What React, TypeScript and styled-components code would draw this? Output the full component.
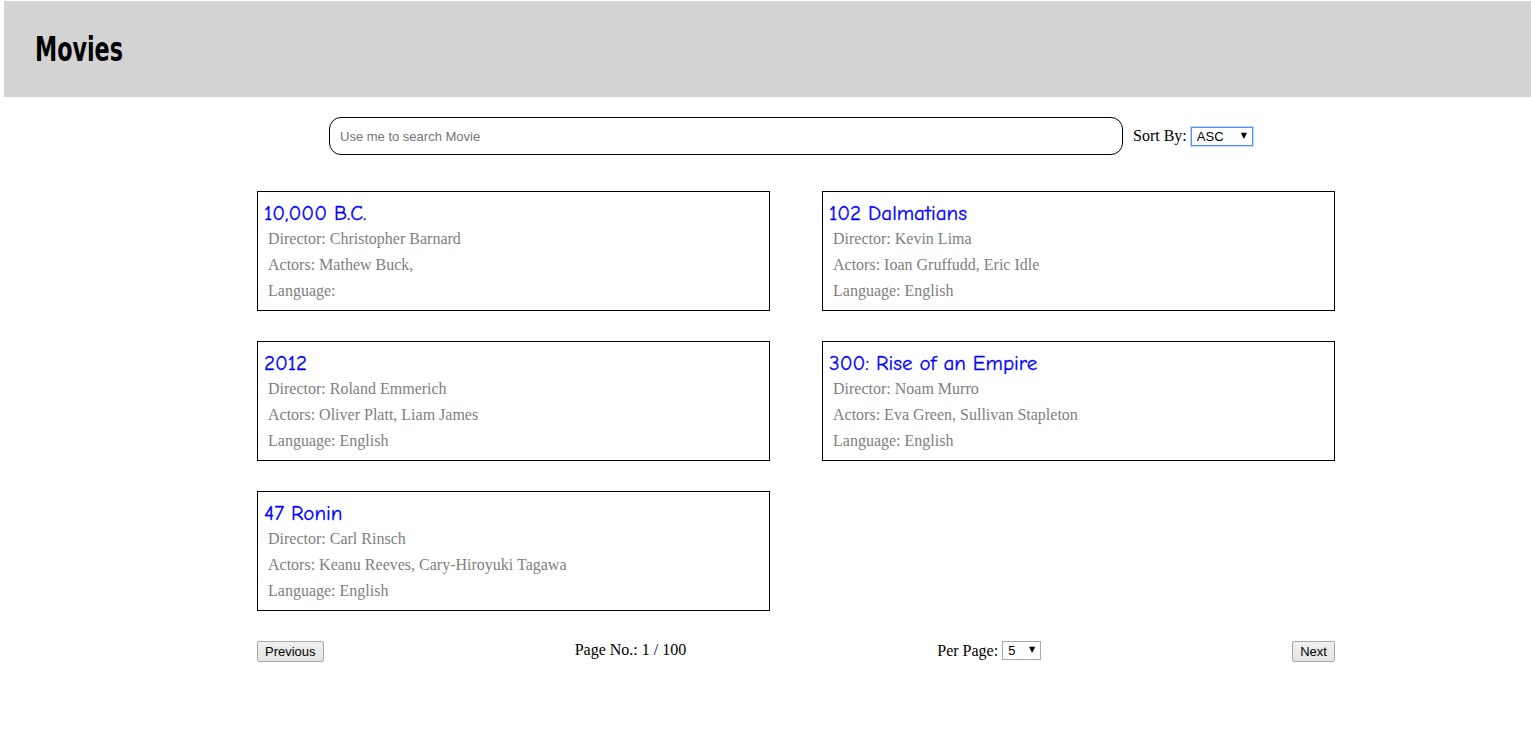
import React, { useState } from "react";
import styled, { createGlobalStyle } from "styled-components";

interface Movie {
  title: string;
  director: string;
  actors: string;
  language: string;
}

const movies: Movie[] = [
  { title: "10,000 B.C.", director: "Christopher Barnard", actors: "Mathew Buck,", language: "" },
  { title: "102 Dalmatians", director: "Kevin Lima", actors: "Ioan Gruffudd, Eric Idle", language: "English" },
  { title: "2012", director: "Roland Emmerich", actors: "Oliver Platt, Liam James", language: "English" },
  { title: "300: Rise of an Empire", director: "Noam Murro", actors: "Eva Green, Sullivan Stapleton", language: "English" },
  { title: "47 Ronin", director: "Carl Rinsch", actors: "Keanu Reeves, Cary-Hiroyuki Tagawa", language: "English" },
];

const GlobalStyle = createGlobalStyle`
  html, body {
    margin: 0;
    padding: 0;
    background: #fff;
    font-family: "Liberation Serif", "Times New Roman", serif;
    font-size: 16px;
  }
`;

const App = () => {
  const [query, setQuery] = useState("");
  const [sort, setSort] = useState("ASC");
  const [perPage, setPerPage] = useState("5");

  return (
    <>
      <GlobalStyle />
      <Header>
        <Title>Movies</Title>
      </Header>

      <Main>
        <SearchRow>
          <SearchInput
            placeholder="Use me to search Movie"
            value={query}
            onChange={(e) => setQuery(e.target.value)}
          />
          <Label>Sort By:</Label>
          <SelectWrap>
            <Select $width={62} $focused value={sort} onChange={(e) => setSort(e.target.value)}>
              <option>ASC</option>
              <option>DESC</option>
            </Select>
            <Arrow>▼</Arrow>
          </SelectWrap>
        </SearchRow>

        <Grid>
          {movies.map((m) => (
            <Card key={m.title}>
              <MovieTitle>{m.title}</MovieTitle>
              <Detail>Director: {m.director}</Detail>
              <Detail>Actors: {m.actors}</Detail>
              <Detail>Language: {m.language}</Detail>
            </Card>
          ))}
        </Grid>

        <Pagination>
          <Button>Previous</Button>
          <Label>Page No.: 1 / 100</Label>
          <PerPage>
            <Label>Per Page:</Label>
            <SelectWrap>
              <Select $width={39} value={perPage} onChange={(e) => setPerPage(e.target.value)}>
                <option>5</option>
                <option>10</option>
                <option>20</option>
              </Select>
              <Arrow>▼</Arrow>
            </SelectWrap>
          </PerPage>
          <Button>Next</Button>
        </Pagination>
      </Main>
    </>
  );
};

export default App;

const Header = styled.header`
  margin: 1px 0 0 4px;
  height: 96px;
  background-color: #d3d3d3;
  display: flex;
  align-items: center;
  padding-left: 31px;
`;

// no Impact here: squeeze the condensed bold face to the same width
const Title = styled.h1`
  margin: 0;
  font-family: Impact, "DejaVu Sans Condensed", sans-serif;
  font-weight: 700;
  font-size: 33px;
  color: #000;
  transform: scaleX(0.75);
  transform-origin: left center;
`;

const Main = styled.main`
  width: 1078px;
  margin-left: 257px;
  padding-top: 20px;
`;

const SearchRow = styled.div`
  display: flex;
  align-items: center;
  padding-left: 72px;
  gap: 10px;
`;

const SearchInput = styled.input`
  box-sizing: border-box;
  width: 794px;
  height: 38px;
  border: 1px solid #000;
  border-radius: 12px;
  padding: 0 10px;
  font-family: "Liberation Sans", Arial, sans-serif;
  font-size: 13px;
  outline: none;

  &::placeholder {
    color: #757575;
  }
`;

const Label = styled.span`
  font-family: "Liberation Serif", "Times New Roman", serif;
  font-size: 16px;
  color: #000;
  white-space: nowrap;
`;

const SelectWrap = styled.span`
  position: relative;
  display: inline-flex;
  margin-left: -6px;
`;

const Select = styled.select<{ $width: number; $focused?: boolean }>`
  appearance: none;
  box-sizing: border-box;
  width: ${(p) => p.$width}px;
  height: 19px;
  padding: 0 0 0 5px;
  border: 1px solid ${(p) => (p.$focused ? "#4d90fe" : "#a9a9a9")};
  box-shadow: ${(p) => (p.$focused ? "0 0 0 1px rgba(77,144,254,0.35)" : "none")};
  border-radius: 0;
  background: #fff;
  font-family: "Liberation Sans", Arial, sans-serif;
  font-size: 13px;
  color: #000;
  outline: none;
`;

const Arrow = styled.span`
  position: absolute;
  right: 6px;
  top: 4px;
  font-size: 8px;
  line-height: 10px;
  font-family: "DejaVu Sans", sans-serif;
  pointer-events: none;
`;

const Grid = styled.div`
  display: grid;
  grid-template-columns: 513px 513px;
  column-gap: 52px;
  row-gap: 30px;
  margin-top: 36px;
`;

const Card = styled.div`
  box-sizing: border-box;
  height: 120px;
  border: 1px solid #000;
  padding: 8px 6px 6px 6px;
`;

const MovieTitle = styled.div`
  font-family: "Comic Sans MS", "Comic Neue", "DejaVu Sans", sans-serif;
  font-size: 21px;
  line-height: 26px;
  color: #0000ff;
  -webkit-text-stroke: 0.3px #0000ff;
`;

const Detail = styled.div`
  font-family: "Liberation Serif", "Times New Roman", serif;
  font-size: 16px;
  line-height: 26px;
  color: #808080;
  padding-left: 4px;
`;

const Pagination = styled.div`
  display: flex;
  justify-content: space-between;
  align-items: flex-start;
  margin-top: 30px;
`;

const PerPage = styled.div`
  display: flex;
  align-items: center;
  gap: 10px;
`;

const Button = styled.button`
  height: 21px;
  padding: 0 7px;
  border: 1px solid #a9a9a9;
  border-radius: 2px;
  background: linear-gradient(#f0f0f0, #e3e3e3);
  font-family: "Liberation Sans", Arial, sans-serif;
  font-size: 13px;
  color: #000;
`;
